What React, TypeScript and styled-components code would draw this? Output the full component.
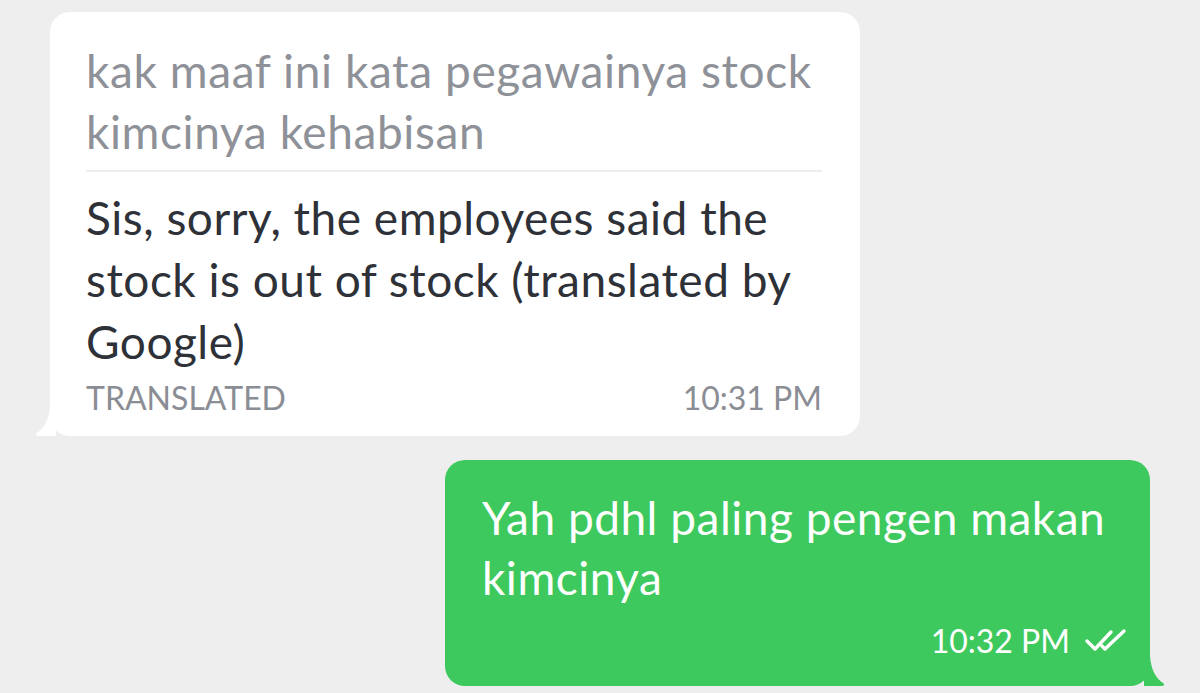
import React from "react";
import styled, { createGlobalStyle } from "styled-components";

const Global = createGlobalStyle`
  html, body { margin: 0; padding: 0; background: #efeeef; }
  body { font-family: Lato, "Noto Sans", sans-serif; -webkit-font-smoothing: antialiased; }
`;

const Screen = styled.div`
  width: 1200px;
  height: 693px;
  overflow: hidden;
  background: #efeeef;
  display: flex;
  flex-direction: column;
  padding: 12px 0 0 0;
  box-sizing: border-box;
  gap: 24px;
`;

const Row = styled.div<{ $side: "left" | "right" }>`
  display: flex;
  justify-content: ${(p) => (p.$side === "left" ? "flex-start" : "flex-end")};
  padding: ${(p) => (p.$side === "left" ? "0 0 0 50px" : "0 50px 0 0")};
`;

const Bubble = styled.div<{ $variant: "in" | "out" }>`
  position: relative;
  box-sizing: border-box;
  border-radius: 20px;
  background: ${(p) => (p.$variant === "in" ? "#ffffff" : "#3ec95e")};
  width: ${(p) => (p.$variant === "in" ? "810px" : "705px")};
  padding: ${(p) => (p.$variant === "in" ? "28px 38px 16px 36px" : "28px 20px 23px 37px")};
`;

const TailLeft = styled.svg`
  position: absolute;
  left: -16px;
  bottom: 0;
  width: 40px;
  height: 30px;
`;

const TailRight = styled.svg`
  position: absolute;
  right: -16px;
  bottom: 0;
  width: 40px;
  height: 30px;
`;

const Original = styled.div`
  font-size: 46px;
  line-height: 61px;
  letter-spacing: 0.6px;
  color: #8e9198;
  padding-bottom: 8px;
  border-bottom: 2px solid #ececee;
`;

const Translation = styled.div`
  font-size: 46px;
  line-height: 62px;
  letter-spacing: 0.5px;
  color: #2e3137;
  padding-top: 15px;
`;

const Footer = styled.div`
  display: flex;
  justify-content: space-between;
  align-items: center;
  margin-top: 3px;
  font-size: 32px;
  line-height: 44px;
  color: #8a8d94;
`;

const OutText = styled.div`
  font-size: 46px;
  line-height: 60px;
  letter-spacing: 0.5px;
  color: #ffffff;
`;

const OutFooter = styled.div`
  display: flex;
  justify-content: flex-end;
  align-items: center;
  gap: 14px;
  margin-top: 11px;
  font-size: 32px;
  line-height: 44px;
  color: #ffffff;
`;

const Checks = styled.svg`
  width: 46px;
  height: 26px;
`;

export default function App() {
  return (
    <>
      <Global />
      <Screen>
        <Row $side="left">
          <Bubble $variant="in">
            <TailLeft viewBox="0 0 40 30">
              <path d="M16 0 L22 0 L22 30 L4 30 C2 30 1 28 3 27 C10 22 15 14 16 0 Z" fill="#ffffff" />
            </TailLeft>
            <Original>kak maaf ini kata pegawainya stock kimcinya kehabisan</Original>
            <Translation>
              Sis, sorry, the employees said the stock is out of stock (translated by Google)
            </Translation>
            <Footer>
              <span>TRANSLATED</span>
              <span>10:31 PM</span>
            </Footer>
          </Bubble>
        </Row>
        <Row $side="right">
          <Bubble $variant="out">
            <TailRight viewBox="0 0 40 30">
              <path d="M24 0 L18 0 L18 30 L36 30 C38 30 39 28 37 27 C30 22 25 14 24 0 Z" fill="#3ec95e" />
            </TailRight>
            <OutText>Yah pdhl paling pengen makan kimcinya</OutText>
            <OutFooter>
              <span>10:32 PM</span>
              <Checks viewBox="0 0 46 26">
                <path d="M3 13 L11 21 L27 4" fill="none" stroke="#ffffff" strokeWidth="3.4" strokeLinecap="round" strokeLinejoin="round" />
                <path d="M18 18 L21 21 L40 3" fill="none" stroke="#ffffff" strokeWidth="3.4" strokeLinecap="round" strokeLinejoin="round" />
              </Checks>
            </OutFooter>
          </Bubble>
        </Row>
      </Screen>
    </>
  );
}
